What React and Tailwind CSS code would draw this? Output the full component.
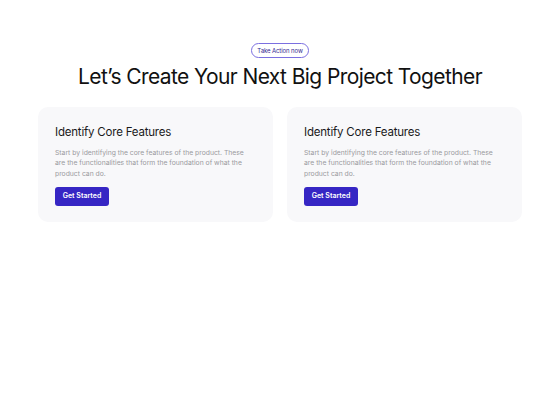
export default function App() {
  const cards = [0, 1];
  return (
    <div className="w-[560px] h-[400px] bg-white flex flex-col items-center pt-[43px]" style={{ fontFamily: "Inter, 'Noto Sans', sans-serif" }}>
      <div className="h-[15px] px-[5px] rounded-full border border-[#7b6fe0] text-[6px] text-[#2f2790] flex items-center leading-none tracking-[-0.1px]">
        Take Action now
      </div>
      <h1 className="mt-[4px] text-[21px] leading-[30px] text-[#111] tracking-[-0.6px]">
        Let’s Create Your Next Big Project Together
      </h1>
      <div className="mt-[15px] flex gap-[14px]">
        {cards.map((i) => (
          <div key={i} className="w-[235px] h-[115px] rounded-[10px] bg-[#f8f8fa] px-[17px] pt-[17px]">
            <div className="text-[11.5px] leading-[16px] text-[#1a1a1a] tracking-[-0.2px]">Identify Core Features</div>
            <p className="mt-[8px] text-[6.8px] leading-[10.3px] text-[#9a9a9e] w-[200px]">
              Start by identifying the core features of the product. These are the functionalities that form the foundation of what the product can do.
            </p>
            <div className="mt-[8px] w-[54px] h-[19px] rounded-[3px] bg-[#3626c4] text-white text-[7px] font-semibold flex items-center justify-center">
              Get Started
            </div>
          </div>
        ))}
      </div>
    </div>
  );
}
